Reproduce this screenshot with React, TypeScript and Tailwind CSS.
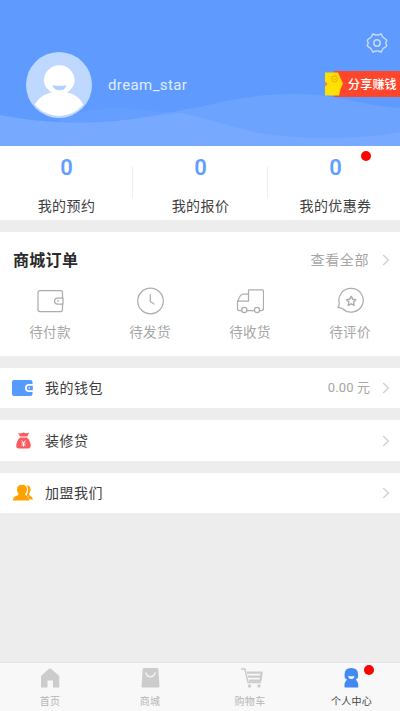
import React from "react";

type IconProps = { className?: string };

const Chevron = () => (
  <svg className="h-3 w-2 shrink-0" viewBox="0 0 8 12" fill="none" stroke="#cfcfcf" strokeWidth="1.2">
    <path d="M1.2 1 6.400 6 1.200 11" />
  </svg>
);

const Waves = () => (
  <svg className="absolute inset-0 h-full w-full" viewBox="0 0 400 146" preserveAspectRatio="none">
    <path d="M60 118C85 110 100 108 120 108C145 109 160 113 178 113V146H60Z" fill="#659eff" />
    <path d="M0 116C40 123 85 125 125 120C165 114 185 109 200 107C230 99 260 94 295 94C335 94 365 106 400 108V146H0Z" fill="#6ca3ff" />
    <path d="M0 115C40 123 85 125 125 120C150 117 165 114 178 113C200 115 235 129 265 134C315 141 370 138 400 132V146H0Z" fill="#76a9ff" />
  </svg>
);

const Avatar = () => (
  <svg className="h-[66px] w-[66px] shrink-0" viewBox="0 0 66 66">
    <defs>
      <clipPath id="avatar-clip">
        <circle cx="33" cy="32.500" r="31.500" />
      </clipPath>
    </defs>
    <circle cx="33" cy="33" r="33" fill="#bfd8ff" />
    <g clipPath="url(#avatar-clip)" fill="#fff">
      <path d="M8 54C12 46 18 42 26 40.500C20.500 37 18 33 18 28.500A15.300 15.300 0 0 1 48.600 28.500C48.600 33 46 37 41 40.500C49 42 54 46 58 54V66H8Z" />
    </g>
    <path d="M26.500 33.200Q33.500 34.200 40.500 33.200Q39.500 38.300 33.500 38.300Q27.500 38.300 26.500 33.200Z" fill="#b3d0ff" />
  </svg>
);

const Gear = () => (
  <svg className="h-[22px] w-[22px]" viewBox="0 0 22 22" fill="none" stroke="#c6dbff" strokeWidth="1.5" strokeLinejoin="round">
    <path d="M7 1.800Q8.500 3 11 3Q13.500 3 15 1.800L16.500 4.500Q17.200 6 18.800 6.500L20 7.500Q21.200 8.500 20.300 9.300Q19.300 11 20.300 12.700Q21.200 13.500 20 14.500L18.800 15.500Q17.200 16 16.500 17.500L15 20.200Q13.500 19 11 19Q8.500 19 7 20.200L5.500 17.500Q4.800 16 3.200 15.500L2 14.500Q.8 13.500 1.700 12.700Q2.700 11 1.700 9.300Q.8 8.500 2 7.500L3.200 6.500Q4.800 6 5.500 4.500Z" />
    <circle cx="11" cy="11" r="3.200" />
  </svg>
);

const Coupon = () => (
  <svg className="h-[26px] w-[19px] shrink-0" viewBox="0 0 19 26">
    <path d="M9 0H19V26H9Z" fill="#ff462c" />
    <path d="M0 1.500H13L15 6L18 12.500L15.500 18L14 24.500H0V15L2 13L0 11Z" fill="#ffe000" />
    <path d="M0 10.500 2.500 13 0 15.500Z" fill="#f5822c" />
    <circle cx="9.500" cy="8" r="2.800" fill="none" stroke="#f5b900" strokeWidth="1.300" />
    <path d="m8 7.500 1.500 1.500 2-2" fill="none" stroke="#f5a800" />
  </svg>
);

const line = { fill: "none", stroke: "#adadad", strokeWidth: 1.25, strokeLinejoin: "round", strokeLinecap: "round" } as const;

const WalletLine = () => (
  <svg className="h-7 w-7" viewBox="0 0 28 28" {...line}>
    <path d="M26.500 11V5.500Q26.500 3.500 24.500 3.500H4Q2 3.500 2 5.500V22.500Q2 24.500 4 24.500H24.500Q26.500 24.500 26.500 22.500V17" />
    <path d="M27 11H21.500A3 3 0 0 0 21.500 17H27Z" />
    <path d="M21.500 13.900h1" />
  </svg>
);

const ClockLine = () => (
  <svg className="h-7 w-7" viewBox="0 0 28 28" {...line}>
    <circle cx="14.500" cy="14" r="12.800" />
    <path d="M14.300 7.500V14.500L18 17" />
  </svg>
);

const TruckLine = () => (
  <svg className="h-7 w-7" viewBox="0 0 28 28" {...line}>
    <path d="M12.500 14V3.500Q12.500 2.800 13.200 2.800H26Q27.500 2.800 27.500 4.500V21.500Q27.500 23.500 25.500 23.500H24M18 23.500H11M5.500 23.500H3.500Q1.500 23.500 1.500 21.500V15Q2.500 12 4.500 8.500Q5.500 7 7.500 7H12.500M1.500 14H12.500" />
    <circle cx="8.300" cy="23" r="2.600" />
    <circle cx="21" cy="23" r="2.600" />
  </svg>
);

const ReviewLine = () => (
  <svg className="h-7 w-7" viewBox="0 0 28 28" {...line}>
    <path d="M3.300 16.500A12.200 11.800 0 1 1 6.500 21.700Q5 20.700 2.800 20.700Q1.700 20.700 2.200 19.700Q3.300 18.500 3.300 16.500Z" />
    <path d="m15.200 9.300 1.500 2.900 3.100.6-2.200 2.300.5 3.200-2.900-1.500-2.900 1.500.5-3.200-2.200-2.300 3.100-.6Z" strokeWidth="1.500" />
  </svg>
);

const WalletSolid = () => (
  <svg className="h-[18px] w-[22px]" viewBox="0 0 22 18">
    <path d="M0 3Q0 1 2 1H18.500Q20.500 1 20.500 3V15Q20.500 17 18.500 17H2Q0 17 0 15Z" fill="#559aff" />
    <path d="M21 5H17A4 4 0 0 0 17 13H21Z" fill="#fff" />
    <path d="M20.800 6.700H17A2.300 2.300 0 0 0 17 11.300H20.800Z" fill="#559aff" />
    <circle cx="17.200" cy="9" r=".8" fill="#fff" />
  </svg>
);

const MoneyBag = () => (
  <svg className="h-[18px] w-[22px]" viewBox="0 0 22 18">
    <path d="M6 .8Q8 2 10 1Q11.500 0 13 1Q15 1.500 17 .5L15.500 4.500H8Z" fill="#fa5b60" />
    <path d="M8 5.500H15Q18.700 9 18.700 14Q18.700 16.500 16 16.500H7Q4.300 16.500 4.300 14Q4.300 9 8 5.500Z" fill="#fa5b60" />
    <path d="m9.500 8.500 2 2.200 2-2.200M9.500 11h4M9.500 13h4M11.500 10.500v4" fill="none" stroke="#fff" strokeWidth=".9" />
  </svg>
);

const People = () => (
  <svg className="h-[18px] w-[22px]" viewBox="0 0 22 18" fill="#ffa200">
    <path d="M14.500 1.200Q18.800 1.500 18.500 6Q18.400 8.500 17 10.300Q16.800 11.300 18.500 12Q20.700 13 21 15.500H17.500Q17 13 14.500 11Q16 9 16 5.500Q16 2.500 14.500 1.200Z" />
    <path d="M10 .8Q15 .8 15 5.500Q15 8.200 13 10Q13 11 15 12Q17 13.200 17.200 16.500H.8Q1 13.200 4 12Q6.800 11.200 6.800 10Q5 8.200 5 5.500Q5 .8 10 .8Z" />
  </svg>
);

const HomeTab = ({ className }: IconProps) => (
  <svg className={className} viewBox="0 0 20 20" fill="#cccccc">
    <path d="M10 .3Q10.500.3 11 .8L18.800 7.500Q19.300 8 19.300 9V19.500H13V12.500H7.500V19.500H1V9Q1 8 1.500 7.500L9 .8Q9.500.3 10 .3Z" />
  </svg>
);

const MallTab = ({ className }: IconProps) => (
  <svg className={className} viewBox="0 0 20 20">
    <path d="M4 0H17Q18.200 0 18.300 1L19.500 18Q19.500 19.500 18.300 19.500H2.700Q1.500 19.500 1.500 18L2.700 1Q2.800 0 4 0Z" fill="#cccccc" />
    <path d="M6 5Q7 8.700 10.500 8.700T15 5" fill="none" stroke="#f2f2f2" strokeWidth="1.500" strokeLinecap="round" />
  </svg>
);

const CartTab = ({ className }: IconProps) => (
  <svg className={className} viewBox="0 0 22 20" fill="none" stroke="#cccccc">
    <path d="M0 1H4L7 14.500H20" strokeWidth="1.500" />
    <path d="M6 4.700H21.500M7 8.700H20.500M8 12.700H20M20.700 4L19.500 13" strokeWidth="2.200" />
    <circle cx="8.500" cy="18" r="1.700" fill="#cccccc" stroke="none" />
    <circle cx="18" cy="18" r="1.700" fill="#cccccc" stroke="none" />
  </svg>
);

const PersonTab = ({ className }: IconProps) => (
  <svg className={className} viewBox="0 0 20 20">
    <path d="M11.300 0Q18 0 18 6V9Q18 10.800 15.800 11Q16 12 17.300 13.500Q18.500 15 18.300 19.500H4.500Q4.200 15 5.500 13.500Q6.800 12 6.800 11Q4.600 10.800 4.600 9V6Q4.600 0 11.300 0Z" fill="#4289f5" />
    <path d="M8.300 7.800Q11.300 8.800 14.300 7.800Q14.300 11 11.300 11T8.300 7.800Z" fill="#f8f8f8" />
  </svg>
);

const stats = ["我的预约", "我的报价", "我的优惠券"];
const orders = [
  { label: "待付款", Icon: WalletLine },
  { label: "待发货", Icon: ClockLine },
  { label: "待收货", Icon: TruckLine },
  { label: "待评价", Icon: ReviewLine },
];
const tabs = [
  { label: "首页", Icon: HomeTab, size: "h-5 w-5" },
  { label: "商城", Icon: MallTab, size: "h-5 w-5" },
  { label: "购物车", Icon: CartTab, size: "ml-1 h-5 w-[22px]" },
  { label: "个人中心", Icon: PersonTab, size: "h-5 w-5", active: true },
];

function MenuRow({ icon, label, value, height }: { icon: React.ReactNode; label: string; value?: string; height: string }) {
  return (
    <div className={`flex shrink-0 items-center bg-white pr-[10px] pl-3 ${height}`}>
      {icon}
      <span className="ml-[11px] flex-1 text-[14px] leading-5 tracking-[0.5px] text-[#3c3c3c]">{label}</span>
      {value && <span className="mr-3 text-[13px] tracking-[0.1px] text-[#a6a6a6]">{value}</span>}
      <Chevron />
    </div>
  );
}

export default function App() {
  return (
    <div className="flex h-[711px] w-[400px] flex-col overflow-hidden bg-[#ededed] font-[family-name:Roboto,'Noto_Sans_CJK_SC',sans-serif]">
      <header className="relative h-[146px] shrink-0 bg-[#5f9bff]">
        <Waves />
        <div className="relative flex h-full flex-col pt-8">
          <div className="flex h-[22px] justify-end pr-3">
            <Gear />
          </div>
          <div className="-mt-[2px] flex items-start pl-[26px]">
            <Avatar />
            <span className="mt-[23px] ml-[16px] flex-1 text-[15px] leading-5 tracking-[0.4px] text-[#e1ecff]">dream_star</span>
            <div className="mt-[19px] flex h-[26px] w-[75px] items-center bg-linear-to-r from-transparent from-[18px] to-[#ff462c] to-[18px]">
              <Coupon />
              <span className="ml-1 pt-0.5 text-[12px] font-medium tracking-[0.2px] whitespace-nowrap text-white">分享赚钱</span>
            </div>
          </div>
        </div>
      </header>

      <section className="flex h-[74px] shrink-0 bg-white">
        {stats.map((label, i) => (
          <div key={label} className={`relative flex flex-col items-center ${i === 0 ? "w-[133px]" : i === 1 ? "w-[135px]" : "w-[132px] pl-[3px]"}`}>
            <span className="mt-[10px] text-[22px] leading-6 font-semibold text-[#639eff]">0</span>
            <span className="mt-[16px] text-[14px] leading-5 tracking-[0.4px] text-[#404040]">{label}</span>
            {i < 2 && <i className="absolute top-[20px] right-0 h-8 w-px bg-[#f0f0f0]" />}
            {i === 2 && <i className="absolute top-[5px] left-[93px] h-[10px] w-[10px] rounded-full bg-[#ff0000]" />}
          </div>
        ))}
      </section>

      <section className="mt-3 h-[124px] shrink-0 bg-white">
        <div className="flex h-[55px] items-center pr-[10px] pl-[13px]">
          <h2 className="flex-1 pt-0.5 text-[16px] font-bold tracking-[0.3px] text-[#292929]">商城订单</h2>
          <span className="mr-[13px] pt-px text-[14px] tracking-[0.6px] text-[#a6a6a6]">查看全部</span>
          <Chevron />
        </div>
        <div className="grid grid-cols-4">
          {orders.map(({ label, Icon }) => (
            <div key={label} className="flex flex-col items-center">
              <Icon />
              <span className="mt-[7px] text-[13.500px] leading-5 tracking-[0.4px] text-[#a6a6a6]">{label}</span>
            </div>
          ))}
        </div>
      </section>

      <div className="mt-3 flex flex-col gap-3">
        <MenuRow icon={<WalletSolid />} label="我的钱包" value="0.00 元" height="h-10" />
        <MenuRow icon={<MoneyBag />} label="装修贷" height="h-[41px]" />
        <MenuRow icon={<People />} label="加盟我们" height="h-10" />
      </div>

      <nav className="mt-auto grid h-[49px] shrink-0 grid-cols-4 border-t border-[#e4e4e4] bg-[#f8f8f8]">
        {tabs.map(({ label, Icon, size, active }) => (
          <div key={label} className="relative flex flex-col items-center pt-[5px]">
            <Icon className={size} />
            <span className={`mt-[7px] text-[10px] leading-[14px] tracking-[0.3px] ${active ? "ml-[3px] text-[#444444]" : "text-[#b5b5b5]"}`}>{label}</span>
            {active && <i className="absolute top-[2px] left-[64px] h-[10px] w-[10px] rounded-full bg-[#ff0000]" />}
          </div>
        ))}
      </nav>
    </div>
  );
}
